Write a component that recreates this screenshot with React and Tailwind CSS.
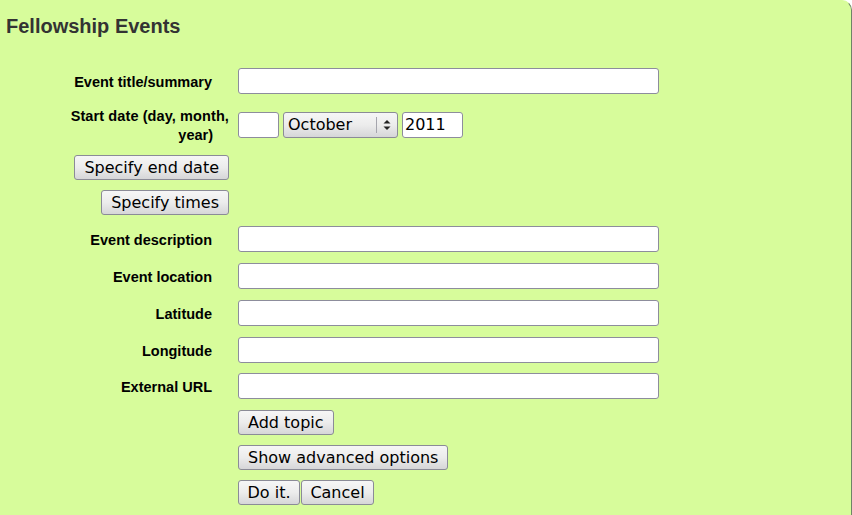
import React from "react";

const labelCls =
  "w-[238px] shrink-0 text-right font-bold text-[14.5px] leading-[19px] text-black font-['Liberation_Sans',Arial,sans-serif]";
const inputCls =
  "h-[26px] w-[421px] rounded-[3px] border border-[#8d8d9c] bg-white";
const btnCls =
  "h-[25px] rounded-[3px] border border-[#8b8b97] bg-gradient-to-b from-[#f6f6f6] via-[#ececec] to-[#d6d6d8] px-[9px] text-[16px] leading-[23px] text-black whitespace-nowrap";

function Row({ label, children, className = "" }) {
  return (
    <div className={"flex items-center " + className}>
      <div className={labelCls + " pr-[26px] pt-[2px]"}>{label}</div>
      {children}
    </div>
  );
}

export default function App() {
  return (
    <div
      className="w-[852px] h-[515px] bg-white overflow-hidden"
      style={{ fontFamily: "'Liberation Sans', Arial, sans-serif" }}
    >
      <div className="h-full w-full bg-[#d7fc9b] rounded-tr-[10px] border-r border-t border-t-[#d7fc9b] border-r-[#6f8466]">
        <h1 className="pl-[6px] pt-[12px] text-[20px] font-bold leading-[26px] text-[#333333]">
          Fellowship Events
        </h1>
        <div
          className="flex flex-col"
          style={{ fontFamily: "'DejaVu Sans', sans-serif" }}
        >
          <Row label="Event title/summary" className="mt-[29px] h-[26px]">
            <div className={inputCls} />
          </Row>
          <div className="mt-[12px] flex h-[38px] items-center">
            <div className={labelCls + " pr-[9px] pt-[2px] whitespace-nowrap"}>
              <div className="pl-[4px] tracking-[0.1px]">Start date (day, month,</div>
              <div className="pr-[16px]">year)</div>
            </div>
            <div className="flex items-center gap-[4px]">
              <div className="h-[26px] w-[41px] rounded-[3px] border border-[#8d8d9c] bg-white" />
              <div className="flex h-[26px] w-[115px] items-center rounded-[3px] border border-[#8b8b97] bg-gradient-to-b from-[#f6f6f6] via-[#ececec] to-[#d6d6d8]">
                <span className="flex-1 pl-[4px] text-[16px] leading-[24px] text-black">
                  October
                </span>
                <div className="h-[16px] w-px bg-[#a5a5ad]" />
                <svg width="18" height="14" viewBox="0 0 18 14" className="mx-[1px]">
                  <path d="M5.5 5.5 L9 2 L12.5 5.5 Z" fill="#222" />
                  <path d="M5.5 8.5 L9 12 L12.5 8.5 Z" fill="#222" />
                </svg>
              </div>
              <div className="flex h-[26px] w-[61px] items-center rounded-[3px] border border-[#8d8d9c] bg-white pl-[2px] text-[16px] text-black">
                2011
              </div>
            </div>
          </div>
          <div className="mt-[11px] flex h-[25px] w-[229px] justify-end">
            <button className={btnCls}>Specify end date</button>
          </div>
          <div className="mt-[10px] flex h-[25px] w-[229px] justify-end">
            <button className={btnCls}>Specify times</button>
          </div>
          <Row label="Event description" className="mt-[11px] h-[26px]">
            <div className={inputCls} />
          </Row>
          <Row label="Event location" className="mt-[11px] h-[26px]">
            <div className={inputCls} />
          </Row>
          <Row label="Latitude" className="mt-[11px] h-[26px]">
            <div className={inputCls} />
          </Row>
          <Row label="Longitude" className="mt-[11px] h-[26px]">
            <div className={inputCls} />
          </Row>
          <Row label="External URL" className="mt-[10px] h-[26px]">
            <div className={inputCls} />
          </Row>
          <div className="mt-[11px] flex h-[25px] pl-[238px]">
            <button className={btnCls}>Add topic</button>
          </div>
          <div className="mt-[10px] flex h-[25px] pl-[238px]">
            <button className={btnCls}>Show advanced options</button>
          </div>
          <div className="mt-[10px] flex h-[25px] pl-[238px]">
            <button className="h-[25px] w-[62px] rounded-[3px] border border-[#8b8b97] bg-gradient-to-b from-[#f6f6f6] via-[#ececec] to-[#d6d6d8] text-[16px] leading-[23px] text-black whitespace-nowrap">
              Do it.
            </button>
            <button className="ml-px h-[25px] w-[73px] rounded-[3px] border border-[#8b8b97] bg-gradient-to-b from-[#f6f6f6] via-[#ececec] to-[#d6d6d8] text-[16px] leading-[23px] text-black whitespace-nowrap">
              Cancel
            </button>
          </div>
        </div>
      </div>
    </div>
  );
}
